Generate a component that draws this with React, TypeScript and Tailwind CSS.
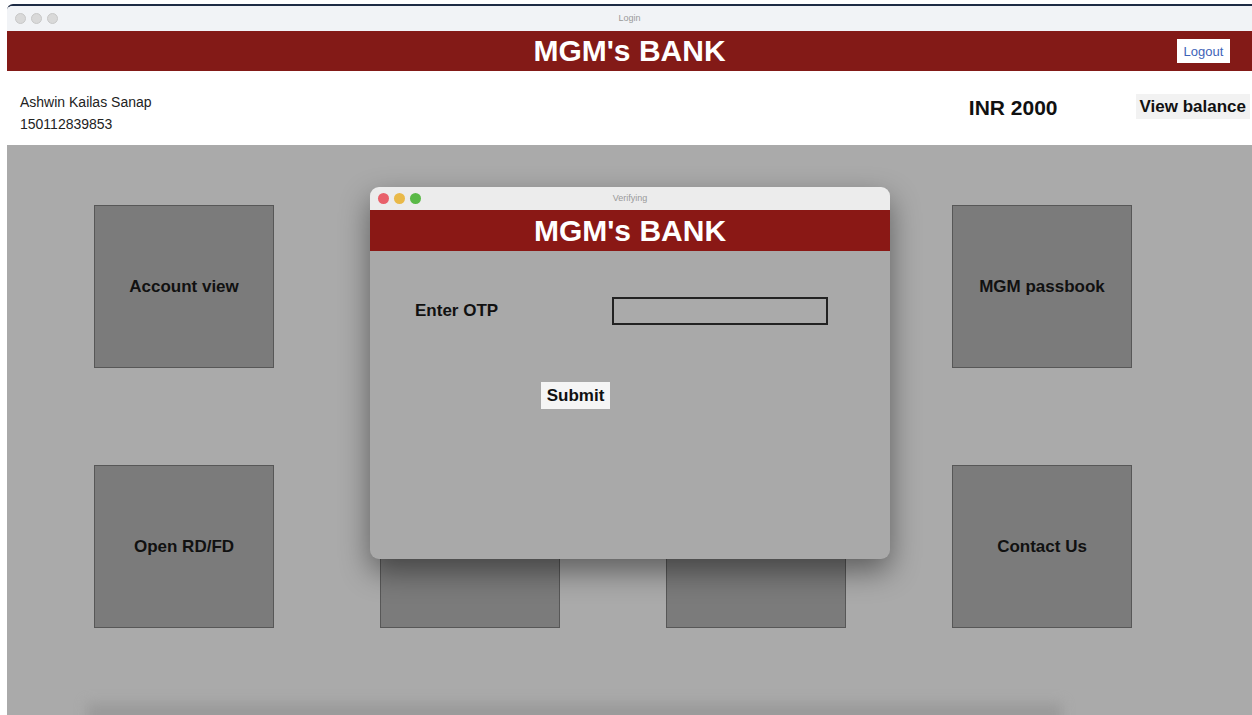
import { ReactNode } from "react";

const font = { fontFamily: '"Liberation Sans", Arial, sans-serif' };

const Tile = ({ label }: { label?: string }) => (
  <div className="w-[180px] h-[163px] bg-[#7b7b7b] border border-[#575757] flex items-center justify-center text-[17px] font-bold text-[#111]">
    {label}
  </div>
);

const Lights = ({ colored }: { colored?: boolean }) => (
  <div className="flex items-center gap-[5px]">
    <span className={`w-[11px] h-[11px] rounded-full ${colored ? "bg-[#e8606a]" : "bg-[#d9d9d9] border border-[#c8c8c8]"}`} />
    <span className={`w-[11px] h-[11px] rounded-full ${colored ? "bg-[#e9b949]" : "bg-[#d9d9d9] border border-[#c8c8c8]"}`} />
    <span className={`w-[11px] h-[11px] rounded-full ${colored ? "bg-[#5ab947]" : "bg-[#d9d9d9] border border-[#c8c8c8]"}`} />
  </div>
);

const TitleBar = ({ title, colored, children }: { title: string; colored?: boolean; children?: ReactNode }) => (
  <div className="relative flex items-center h-full px-[8px]">
    <Lights colored={colored} />
    <div className="absolute inset-0 flex items-center justify-center text-[9px] text-[#9a9a9a]">{title}</div>
    {children}
  </div>
);

export default function App() {
  return (
    <div style={font} className="w-[1252px] h-[715px] bg-white pt-[4px] pl-[7px] overflow-hidden">
      <div className="relative h-full flex flex-col border-t-2 border-[#1e2c45] rounded-tl-[6px] overflow-hidden">
        {/* window chrome */}
        <div className="h-[25px] bg-[#f1f3f6] shrink-0">
          <TitleBar title="Login" />
        </div>

        {/* bank header */}
        <div className="relative h-[40px] bg-[#831a17] flex items-center justify-center shrink-0">
          <span className="text-white font-bold text-[30px] leading-none">MGM's BANK</span>
          <button className="absolute right-[22px] top-[8px] h-[24px] w-[53px] bg-white text-[#3e63b8] text-[13px] leading-none">
            Logout
          </button>
        </div>

        {/* account strip */}
        <div className="h-[74px] bg-white flex items-center shrink-0">
          <div className="pl-[13px] pt-[10px] text-[14px] leading-[22px] text-[#222]">
            <div>Ashwin Kailas Sanap</div>
            <div>150112839853</div>
          </div>
          <div className="ml-auto mr-[78px] text-[21px] font-bold text-[#111]">INR 2000</div>
          <button className="mr-[2px] mb-[4px] h-[25px] px-[4px] bg-[#f2f2f2] text-[17px] font-bold text-[#111] leading-none">
            View balance
          </button>
        </div>

        {/* menu grid */}
        <div className="relative flex-1 bg-[#aaaaaa] pt-[60px] pl-[87px]">
          <div className="grid grid-cols-[180px_180px_180px_180px] gap-x-[106px] gap-y-[97px]">
            <Tile label="Account view" />
            <Tile />
            <Tile />
            <Tile label="MGM passbook" />
            <Tile label="Open RD/FD" />
            <Tile />
            <Tile />
            <Tile label="Contact Us" />
          </div>
          <div className="absolute left-[80px] right-[190px] bottom-[-10px] h-[22px] bg-[#9a9a9a] blur-[6px]" />

          {/* otp dialog */}
          <div className="absolute left-[363px] top-[42px] w-[520px] h-[372px] rounded-[9px] overflow-hidden bg-[#a9a9a9] shadow-[0_12px_30px_rgba(0,0,0,0.45)] flex flex-col">
            <div className="h-[23px] bg-[#ececec] shrink-0">
              <TitleBar title="Verifying" colored />
            </div>
            <div className="h-[41px] bg-[#8a1815] flex items-center justify-center shrink-0">
              <span className="text-white font-bold text-[30px] leading-none">MGM's BANK</span>
            </div>
            <div className="flex flex-col pt-[46px]">
              <div className="flex items-center">
                <span className="ml-[45px] w-[197px] text-[17px] font-bold text-[#111]">Enter OTP</span>
                <div className="w-[216px] h-[28px] border-2 border-[#222] bg-[#aaaaaa]" />
              </div>
              <button className="ml-[171px] mt-[57px] w-[69px] h-[27px] bg-[#f5f5f5] text-[17px] font-bold text-[#111]">
                Submit
              </button>
            </div>
          </div>
        </div>
      </div>
    </div>
  );
}
